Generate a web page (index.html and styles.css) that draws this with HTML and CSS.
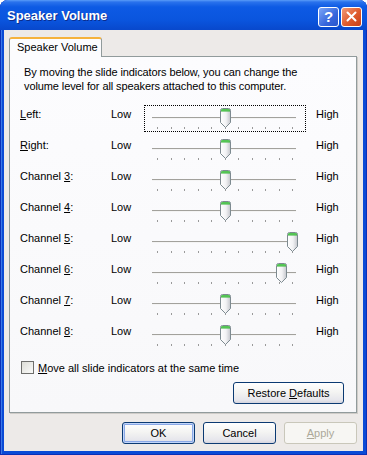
FILE: index.html
```html
<!DOCTYPE html>
<html>
<head>
  <meta charset="utf-8">
  <title>Speaker Volume</title>
  <link rel="stylesheet" href="styles.css">
</head>
<body>
  <!-- shared slider thumb -->
  <svg class="defs" width="0" height="0">
    <defs>
      <linearGradient id="thumbBody" x1="0" y1="0" x2="1" y2="0">
        <stop offset="0" stop-color="#ffffff" />
        <stop offset="0.55" stop-color="#f2f2f4" />
        <stop offset="1" stop-color="#c4c6cc" />
      </linearGradient>
      <symbol id="thumb" viewBox="0 0 11 20">
        <path d="M0.5 2.5Q0.5 0.5 2.5 0.5H8.5Q10.5 0.5 10.5 2.5V14.5L5.5 19.5L0.5 14.5Z" fill="url(#thumbBody)" stroke="#7d8a90" />
        <path d="M1 3.5V2.5Q1 1 2.5 1H8.5Q10 1 10 2.5V3.5Z" fill="#2fb32f" />
        <path d="M1.5 2H9.5" stroke="#8ee08e" stroke-width="0.8" />
      </symbol>
    </defs>
  </svg>

  <div class="window">
    <div class="titlebar">
      <span class="title">Speaker Volume</span>
      <span class="caption-btn help">?</span>
      <span class="caption-btn close">
        <svg width="11" height="11" viewBox="0 0 11 11">
          <path d="M1.5 1.5L9.5 9.5M9.5 1.5L1.5 9.5" stroke="#fff" stroke-width="2" stroke-linecap="round" />
        </svg>
      </span>
    </div>

    <div class="client">
      <div class="tabs">
        <span class="tab">Speaker Volume</span>
      </div>

      <div class="panel">
        <p class="intro">
          By moving the slide indicators below, you can change the<br>
          volume level for all speakers attached to this computer.
        </p>

        <div class="channels">
          <div class="channel">
            <label><u>L</u>eft:</label>
            <span>Low</span>
            <div class="slider focused">
              <div class="track"></div>
              <div class="ticks"><i></i><i></i><i></i><i></i><i></i><i></i><i></i><i></i><i></i><i></i><i></i></div>
              <svg class="thumb" style="--v: 0.5"><use href="#thumb" /></svg>
            </div>
            <span class="high">High</span>
          </div>
          <div class="channel">
            <label><u>R</u>ight:</label>
            <span>Low</span>
            <div class="slider">
              <div class="track"></div>
              <div class="ticks"><i></i><i></i><i></i><i></i><i></i><i></i><i></i><i></i><i></i><i></i><i></i></div>
              <svg class="thumb" style="--v: 0.5"><use href="#thumb" /></svg>
            </div>
            <span class="high">High</span>
          </div>
          <div class="channel">
            <label>Channel <u>3</u>:</label>
            <span>Low</span>
            <div class="slider">
              <div class="track"></div>
              <div class="ticks"><i></i><i></i><i></i><i></i><i></i><i></i><i></i><i></i><i></i><i></i><i></i></div>
              <svg class="thumb" style="--v: 0.5"><use href="#thumb" /></svg>
            </div>
            <span class="high">High</span>
          </div>
          <div class="channel">
            <label>Channel <u>4</u>:</label>
            <span>Low</span>
            <div class="slider">
              <div class="track"></div>
              <div class="ticks"><i></i><i></i><i></i><i></i><i></i><i></i><i></i><i></i><i></i><i></i><i></i></div>
              <svg class="thumb" style="--v: 0.5"><use href="#thumb" /></svg>
            </div>
            <span class="high">High</span>
          </div>
          <div class="channel">
            <label>Channel <u>5</u>:</label>
            <span>Low</span>
            <div class="slider">
              <div class="track"></div>
              <div class="ticks"><i></i><i></i><i></i><i></i><i></i><i></i><i></i><i></i><i></i><i></i><i></i></div>
              <svg class="thumb" style="--v: 1"><use href="#thumb" /></svg>
            </div>
            <span class="high">High</span>
          </div>
          <div class="channel">
            <label>Channel <u>6</u>:</label>
            <span>Low</span>
            <div class="slider">
              <div class="track"></div>
              <div class="ticks"><i></i><i></i><i></i><i></i><i></i><i></i><i></i><i></i><i></i><i></i><i></i></div>
              <svg class="thumb" style="--v: 0.92"><use href="#thumb" /></svg>
            </div>
            <span class="high">High</span>
          </div>
          <div class="channel">
            <label>Channel <u>7</u>:</label>
            <span>Low</span>
            <div class="slider">
              <div class="track"></div>
              <div class="ticks"><i></i><i></i><i></i><i></i><i></i><i></i><i></i><i></i><i></i><i></i><i></i></div>
              <svg class="thumb" style="--v: 0.5"><use href="#thumb" /></svg>
            </div>
            <span class="high">High</span>
          </div>
          <div class="channel">
            <label>Channel <u>8</u>:</label>
            <span>Low</span>
            <div class="slider">
              <div class="track"></div>
              <div class="ticks"><i></i><i></i><i></i><i></i><i></i><i></i><i></i><i></i><i></i><i></i><i></i></div>
              <svg class="thumb" style="--v: 0.5"><use href="#thumb" /></svg>
            </div>
            <span class="high">High</span>
          </div>
        </div>

        <div class="check-row">
          <span class="checkbox"></span>
          <span><u>M</u>ove all slide indicators at the same time</span>
        </div>

        <div class="restore-row">
          <button type="button" class="btn restore">Restore <u>D</u>efaults</button>
        </div>
      </div>

      <div class="buttons">
        <button type="button" class="btn default">OK</button>
        <button type="button" class="btn">Cancel</button>
        <button type="button" class="btn" disabled><u>A</u>pply</button>
      </div>
    </div>
  </div>
</body>
</html>
```

FILE: styles.css
```css
body {
  margin: 0;
  background: #fff;
  font-family: "Liberation Sans", Arial, sans-serif;
  font-size: 11px;
  color: #000;
}

.defs {
  position: absolute;
}

/* Window frame */
.window {
  width: 367px;
  height: 455px;
  box-sizing: border-box;
  display: flex;
  flex-direction: column;
  padding: 0 4px 4px;
  background: #0a4ad6;
  border-radius: 8px 8px 0 0;
  box-shadow: inset 1px 0 #0a2fb8, inset -1px 0 #0a2fb8, inset 0 -1px #0a2fb8, inset 2px 0 #3a78e8;
}

.titlebar {
  height: 30px;
  flex: none;
  display: flex;
  align-items: center;
  gap: 2px;
  margin: 0 -4px;
  padding: 0 5px 0 7px;
  border-radius: 8px 8px 0 0;
  background: linear-gradient(#5a9cf8 0, #2a72ec 2px, #0d5ae4 7px, #0a55de 20px, #0848cc 30px);
}

.title {
  flex: 1;
  color: #fff;
  font-weight: bold;
  font-size: 13px;
  text-shadow: 1px 1px #0b2c8c;
  margin-top: 1px;
}

.caption-btn {
  width: 19px;
  height: 18px;
  margin-top: 3px;
  display: flex;
  align-items: center;
  justify-content: center;
  border: 1px solid #fff;
  border-radius: 3px;
  color: #fff;
}

.help {
  background: linear-gradient(135deg, #7ba6f7, #3766dc 60%, #2856cc);
  font-weight: bold;
  font-size: 15px;
}

.close {
  background: linear-gradient(135deg, #f29a78, #de5a2c 55%, #c8401a);
}

/* Client area */
.client {
  flex: 1;
  display: flex;
  flex-direction: column;
  padding: 7px 6px 0 5px;
  background: #edeae8;
}

.tabs {
  display: flex;
  height: 20px;
  margin-bottom: -1px;
  position: relative;
  z-index: 1;
}

.tab {
  width: 93px;
  box-sizing: border-box;
  padding: 1px 0 0 7px;
  line-height: 14px;
  background: #fcfcfe;
  border: 1px solid #919b9c;
  border-top: 2px solid #f5b23c;
  border-bottom: none;
  border-radius: 3px 3px 0 0;
}

.panel {
  height: 357px;
  box-sizing: border-box;
  padding: 8px 12px 0 10px;
  background: linear-gradient(#fcfcfe, #f8f8fa);
  border: 1px solid #919b9c;
  box-shadow: 1px 1px 0 #cfccc8;
}

.intro {
  margin: 0 0 12px 4px;
  line-height: 14px;
  letter-spacing: -0.1px;
}

/* Channel rows */
.channel {
  display: grid;
  grid-template-columns: 91px 33px 162px auto;
  align-items: start;
  height: 31px;
}

.channel label,
.channel span {
  padding-top: 3px;
  line-height: 13px;
}

.channel .high {
  padding-left: 10px;
}

.slider {
  position: relative;
  height: 27px;
}

.slider.focused {
  outline: 1px dotted #000;
  outline-offset: -1px;
}

.track {
  width: 144px;
  height: 1px;
  margin: 12px 0 0 8px;
  background: #a2a19c;
  border-bottom: 1px solid #f4f4f4;
}

.ticks {
  width: 136px;
  margin: 8px 0 0 13px;
  display: flex;
  justify-content: space-between;
}

.ticks i {
  width: 1px;
  height: 2px;
  background: #9a9a9a;
}

.thumb {
  position: absolute;
  top: 3px;
  left: calc(8px + var(--v) * 135px);
  width: 11px;
  height: 20px;
}

/* Checkbox and buttons */
.check-row {
  display: flex;
  align-items: center;
  gap: 4px;
  margin: 8px 0 0 1px;
}

.checkbox {
  width: 13px;
  height: 13px;
  box-sizing: border-box;
  border: 1px solid #6e6e6c;
  background: linear-gradient(135deg, #dcdcd6, #fbfbfa);
}

.restore-row {
  display: flex;
  justify-content: flex-end;
  margin-top: 8px;
}

.buttons {
  display: flex;
  justify-content: flex-end;
  gap: 8px;
  margin-top: 9px;
}

.btn {
  width: 73px;
  height: 22px;
  padding: 0;
  font-family: inherit;
  font-size: 11px;
  color: #000;
  border: 1px solid #0b3a72;
  border-radius: 3px;
  background: linear-gradient(#ffffff, #f4f4f2 45%, #e6e6ec 85%, #d4d4de);
}

.btn.restore {
  width: 111px;
}

.btn.default {
  box-shadow: inset 0 0 0 1px #c2d6fa, inset 0 0 0 2px #8aa8e6;
}

.btn:disabled {
  color: #aca899;
  border-color: #c9c7ba;
  background: #f7f6f3;
}
```
